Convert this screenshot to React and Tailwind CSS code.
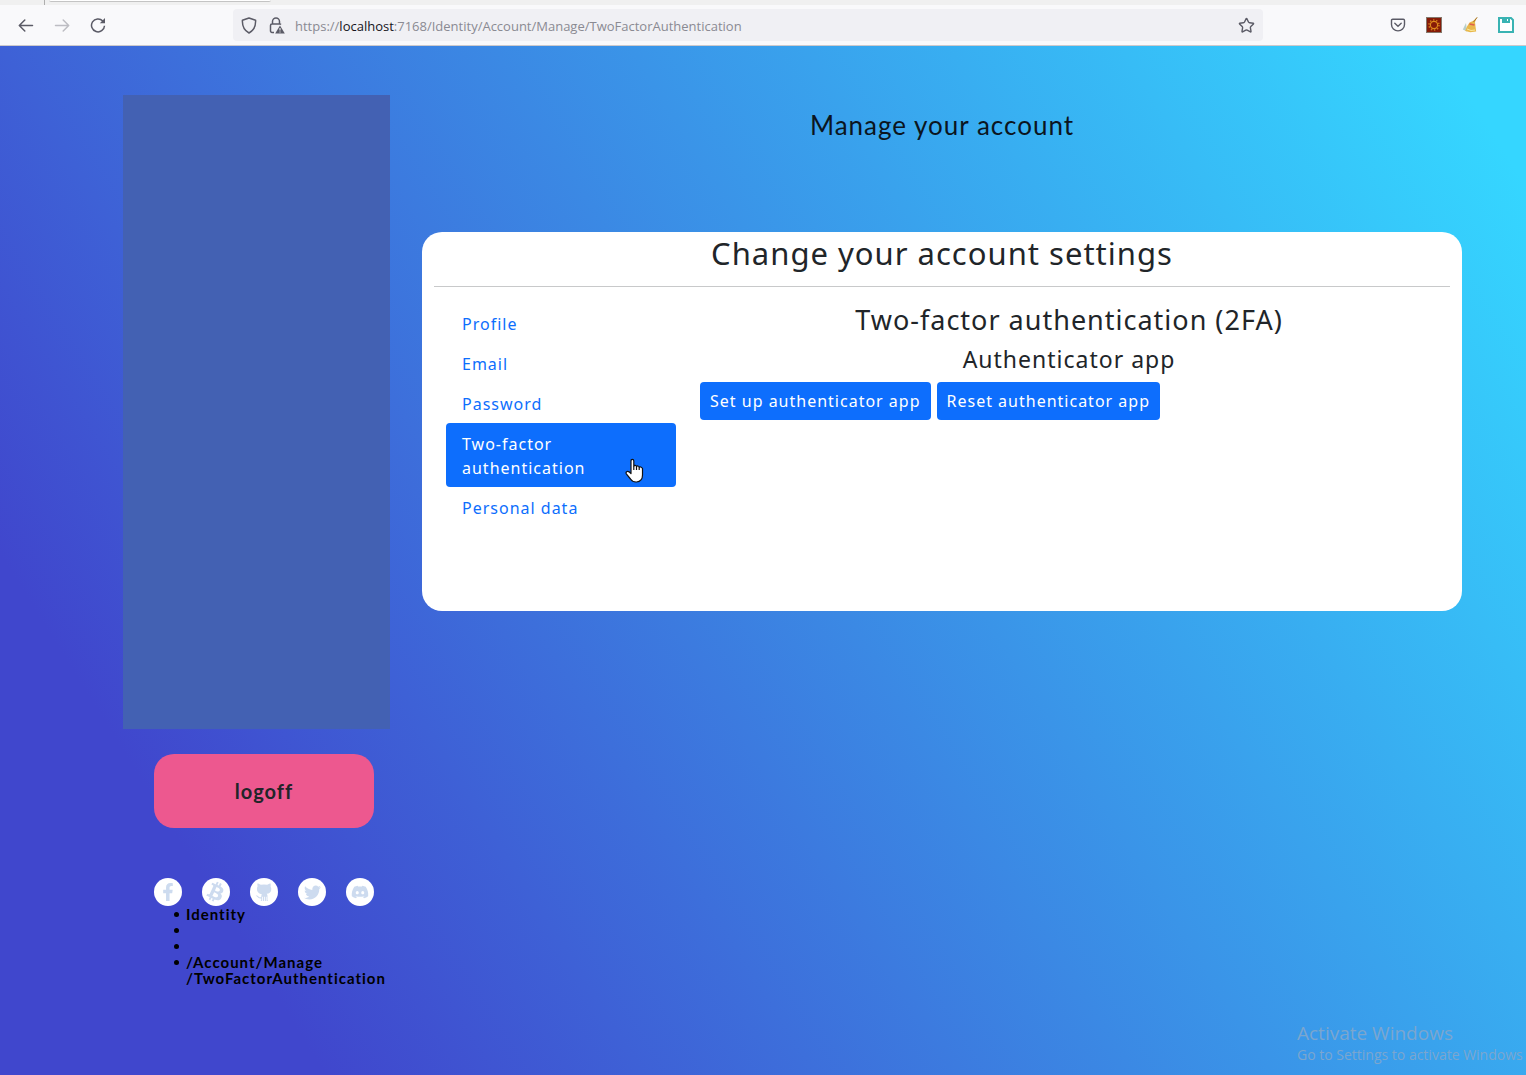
import { Star } from 'lucide-react'
import { FaBtc, FaDiscord, FaFacebookF, FaTwitter } from 'react-icons/fa'

const navItems = [
  { label: 'Profile', href: '#profile' },
  { label: 'Email', href: '#email' },
  { label: 'Password', href: '#password' },
  { label: 'Two-factor authentication', href: '#2fa', active: true },
  { label: 'Personal data', href: '#personal' },
]

function OctocatGlyph() {
  return (
    <svg viewBox="0 0 20 20" className="h-5 w-5" fill="currentColor">
      <path d="M3.600 1.200 6.800 2.800Q10 2.200 13.200 2.800l3.200-1.600q.7 1.800.2 3.300 1 1.500.6 3.700-.7 3.200-4.500 3.600.8.800.8 2v4.400l.8.800h-1.700v-4.200h-.7V19h-1v-4.200h-.8V19H9v-4.200h-.8V19H6.500l.7-.9v-1.700q-2.600.5-3.700-1.300Q2.800 14 1.600 13.800q1.500-.9 2.900.7.900 1.200 2.700.7 0-2.100.6-2.900-4.200-.8-4.800-4.200-.4-2.200.6-3.900-.5-1.400 0-3z" />
    </svg>
  )
}

const socials = [
  { label: 'Facebook', icon: <FaFacebookF size={18} /> },
  { label: 'Bitcoin', icon: <FaBtc size={20} className="rotate-[25deg]" /> },
  { label: 'GitHub', icon: <OctocatGlyph /> },
  { label: 'Twitter', icon: <FaTwitter size={17} /> },
  { label: 'Discord', icon: <FaDiscord size={18} /> },
]

function BrowserBar() {
  return (
    <header className="border-b border-[#ccc9cc] bg-[#f9f9fb] font-['Open_Sans',sans-serif]">
      <div className="flex h-[5px] bg-[#f0f0f0]">
        <div className="w-[45px] border-r border-[#aeaeae]" />
        <div className="ml-1 h-[2px] w-[222px] rounded-b border-b border-[#c4c4c4] bg-white" />
      </div>
      <div className="flex h-10 items-center pr-3">
        <div className="flex w-[233px] shrink-0 gap-5 pl-[18px] text-[#5b5b66]">
          <button aria-label="Back">
            <svg viewBox="0 0 16 16" className="h-4 w-4" fill="none" stroke="currentColor" strokeWidth="1.500" strokeLinecap="round" strokeLinejoin="round">
              <path d="M14.500 8.500h-13M6.800 3 1.300 8.500l5.500 5.500" />
            </svg>
          </button>
          <button aria-label="Forward" disabled className="text-[#bdbdc3]">
            <svg viewBox="0 0 16 16" className="h-4 w-4" fill="none" stroke="currentColor" strokeWidth="1.500" strokeLinecap="round" strokeLinejoin="round">
              <path d="M1.500 8.500h13M9.200 3l5.500 5.500L9.200 14" />
            </svg>
          </button>
          <button aria-label="Reload">
            <svg viewBox="0 0 16 16" className="h-4 w-4" fill="none" stroke="currentColor" strokeWidth="1.500">
              <path d="M12.800 4A6.500 6.500 0 1 0 14.500 8.700" />
              <path d="M15 1v5.200H9.800z" fill="currentColor" stroke="none" />
            </svg>
          </button>
        </div>
        <div className="flex h-8 min-w-0 flex-1 items-center rounded bg-[#f0f0f4] px-2 text-[#5b5b66]">
          <svg viewBox="0 0 16 17" className="h-[17px] w-4 shrink-0" fill="none" stroke="currentColor" strokeWidth="1.500" strokeLinejoin="round">
            <path d="M8 1 14.600 3.300q.4 9-6.600 12.700Q1 12.300 1.400 3.300z" />
          </svg>
          <svg viewBox="0 0 16 17" className="ml-3 h-[17px] w-4 shrink-0" fill="none" stroke="currentColor" strokeWidth="1.500">
            <path d="M3.500 7V4.500a3.500 3.500 0 0 1 7 0V7M5 15.500H3A1.500 1.500 0 0 1 1.500 14V8.500A1.500 1.500 0 0 1 3 7h8a1.500 1.500 0 0 1 1 .500" />
            <path d="M11 8.500 15.800 16.500H6.200z" fill="currentColor" stroke="none" />
            <path d="M11 11v2.500M11 14.500v1" stroke="#fff" strokeWidth="1" />
          </svg>
          <p className="ml-[10px] min-w-0 flex-1 truncate pt-[3px] text-[13px] text-[#8a8a92]">
            https://<span className="text-[#15141a]">localhost</span>:7168/Identity/Account/Manage/TwoFactorAuthentication
          </p>
          <button aria-label="Bookmark this page"><Star size={17} strokeWidth={2} /></button>
        </div>
        <div className="ml-[127px] flex shrink-0 items-center gap-5">
          <button aria-label="Save to Pocket" className="text-[#5b5b66]">
            <svg viewBox="0 0 16 16" className="h-4 w-4" fill="none" stroke="currentColor" strokeWidth="1.400">
              <path d="M2.700 2.200h10.600a1.200 1.200 0 0 1 1.200 1.200v4a6.500 6.500 0 0 1-13 0v-4a1.200 1.200 0 0 1 1.200-1.200z" />
              <path d="m4.800 6.300 3.200 3 3.200-3" strokeLinecap="round" />
            </svg>
          </button>
          <button aria-label="Gear extension">
            <svg viewBox="0 0 16 16" className="h-4 w-4" fill="none">
              <rect x=".5" y=".5" width="15" height="15" fill="#861b08" stroke="#85786c" />
              <circle cx="8" cy="8" r="3.600" stroke="#df8a1c" strokeWidth="1.200" />
              <circle cx="8" cy="8" r="5" stroke="#d07a18" strokeWidth="1.600" strokeDasharray="1.400 1.740" />
            </svg>
          </button>
          <button aria-label="Cleaner extension">
            <svg viewBox="0 0 16 16" className="h-4 w-4">
              <path d="M4 6 .8 12.500l4.200 2z" fill="#b9cfc9" />
              <path d="M15.200.3 11 4 7.500 5.500 5 9.500 3.200 14l5 1.300 6-.8-.7-5L13 5z" fill="#e9b94c" />
              <path d="m5 12 4 1.500 4-.5" stroke="#fbe9a0" fill="none" />
              <path d="m7.500 7 5 1" stroke="#e0604c" strokeWidth="1.600" />
              <path d="M15.200.3 11.500 5" stroke="#a5742b" />
            </svg>
          </button>
          <button aria-label="Save page">
            <svg viewBox="0 0 16 16" className="h-4 w-4">
              <path d="M1 1h12l2 2v12H1z" fill="#fff" stroke="#39b3b3" strokeWidth="2" />
              <path d="M4 1h8v5H4z" fill="#39b3b3" />
              <path d="M9 2h1v2H9z" fill="#fff" />
            </svg>
          </button>
        </div>
      </div>
    </header>
  )
}

function Crumb({ children }) {
  return (
    <li className="flex min-h-4 gap-[7px] before:mt-1.5 before:h-[5px] before:w-[5px] before:shrink-0 before:rounded-full before:bg-black">
      <span>{children}</span>
    </li>
  )
}

function Sidebar() {
  return (
    <aside className="w-[267px] shrink-0 text-black">
      <div className="h-[634px] bg-[#4361b3]" />
      <div className="mt-[25px] ml-[31px] w-[220px]">
        <button className="h-[74px] w-full rounded-[20px] bg-[#ed588f] text-xl font-bold text-[#212529]">logoff</button>
        <div className="mt-[50px] flex justify-between">
          {socials.map((s) => (
            <a key={s.label} href={`#${s.label.toLowerCase()}`} aria-label={s.label} className="grid h-7 w-7 place-items-center rounded-full bg-white text-[#cddbef]">
              {s.icon}
            </a>
          ))}
        </div>
      </div>
      <ul className="ml-[51px] text-[15px] leading-4 font-bold">
        <Crumb>Identity</Crumb>
        <Crumb />
        <Crumb />
        <Crumb>/Account/Manage<br />/TwoFactorAuthentication</Crumb>
      </ul>
    </aside>
  )
}

function HandCursor() {
  return (
    <svg viewBox="0 0 20 26" className="absolute right-[31px] bottom-[3px] h-[26px] w-5" fill="#fff" stroke="#111" strokeWidth="1.200" strokeLinejoin="round">
      <path d="M6 15V3q0-1.700 1.400-1.700T8.800 3v5.500Q9 7.200 10.300 7.400t1.200 1.600q.3-1.200 1.500-1t1.200 1.600q.5-1 1.600-.6T17.500 10.500V17q0 6.500-6 7-4 .2-6-3L1.300 15.800Q.5 14.300 2 13.500q1.700-.5 4 2z" />
      <path d="M8.800 8.500V12M11.500 9v3M14.200 9.500V12" fill="none" />
    </svg>
  )
}

function SettingsCard() {
  return (
    <section className="mt-[92px] min-h-[379px] rounded-[20px] bg-white px-3 pt-0.5 font-['Noto_Sans',sans-serif] text-[#212529]">
      <h2 className="text-center text-[31px] leading-[38px]">Change your account settings</h2>
      <hr className="mt-[14px] border-[#c8c9ca]" />
      <div className="mt-4 flex gap-6 px-3">
        <nav className="w-[230px] shrink-0">
          {navItems.map((item) => (
            <a
              key={item.label}
              href={item.href}
              className={`relative block rounded px-4 pt-[9px] pb-[7px] ${item.active ? 'bg-[#0d6efd] text-white' : 'text-[#0d6efd]'}`}
            >
              {item.active ? <>Two-factor<br />authentication</> : item.label}
              {item.active && <HandCursor />}
            </a>
          ))}
        </nav>
        <div className="min-w-0 flex-1">
          <h3 className="text-center text-[27px] leading-[34px]">Two-factor authentication (2FA)</h3>
          <h4 className="mt-2 text-center text-[23px] leading-[29px]">Authenticator app</h4>
          <div className="mt-2 flex gap-1.5">
            <button className="h-[38px] rounded bg-[#0d6efd] px-2.5 text-white">Set up authenticator app</button>
            <button className="h-[38px] rounded bg-[#0d6efd] px-2.5 text-white">Reset authenticator app</button>
          </div>
        </div>
      </div>
    </section>
  )
}

export default function App() {
  return (
    <div className="flex min-h-screen flex-col">
      <BrowserBar />
      <div className="relative flex flex-1 gap-8 bg-[linear-gradient(238deg,#35d6ff_4%,#4047cd_85%)] pt-[49px] pr-16 pb-[85px] pl-[123px] font-['Lato',sans-serif] tracking-[1px]">
        <Sidebar />
        <main className="min-w-0 flex-1">
          <h1 className="pt-[15px] text-center text-[26px] leading-[30px] text-[#0b1520]">Manage your account</h1>
          <SettingsCard />
        </main>
        <div className="absolute right-0 bottom-[10px] w-[229px] font-['Open_Sans',sans-serif] tracking-normal whitespace-nowrap text-[#7ba6cf]">
          <p className="text-[19px] leading-6">Activate Windows</p>
          <p className="text-sm leading-5">Go to Settings to activate Windows</p>
        </div>
      </div>
    </div>
  )
}
